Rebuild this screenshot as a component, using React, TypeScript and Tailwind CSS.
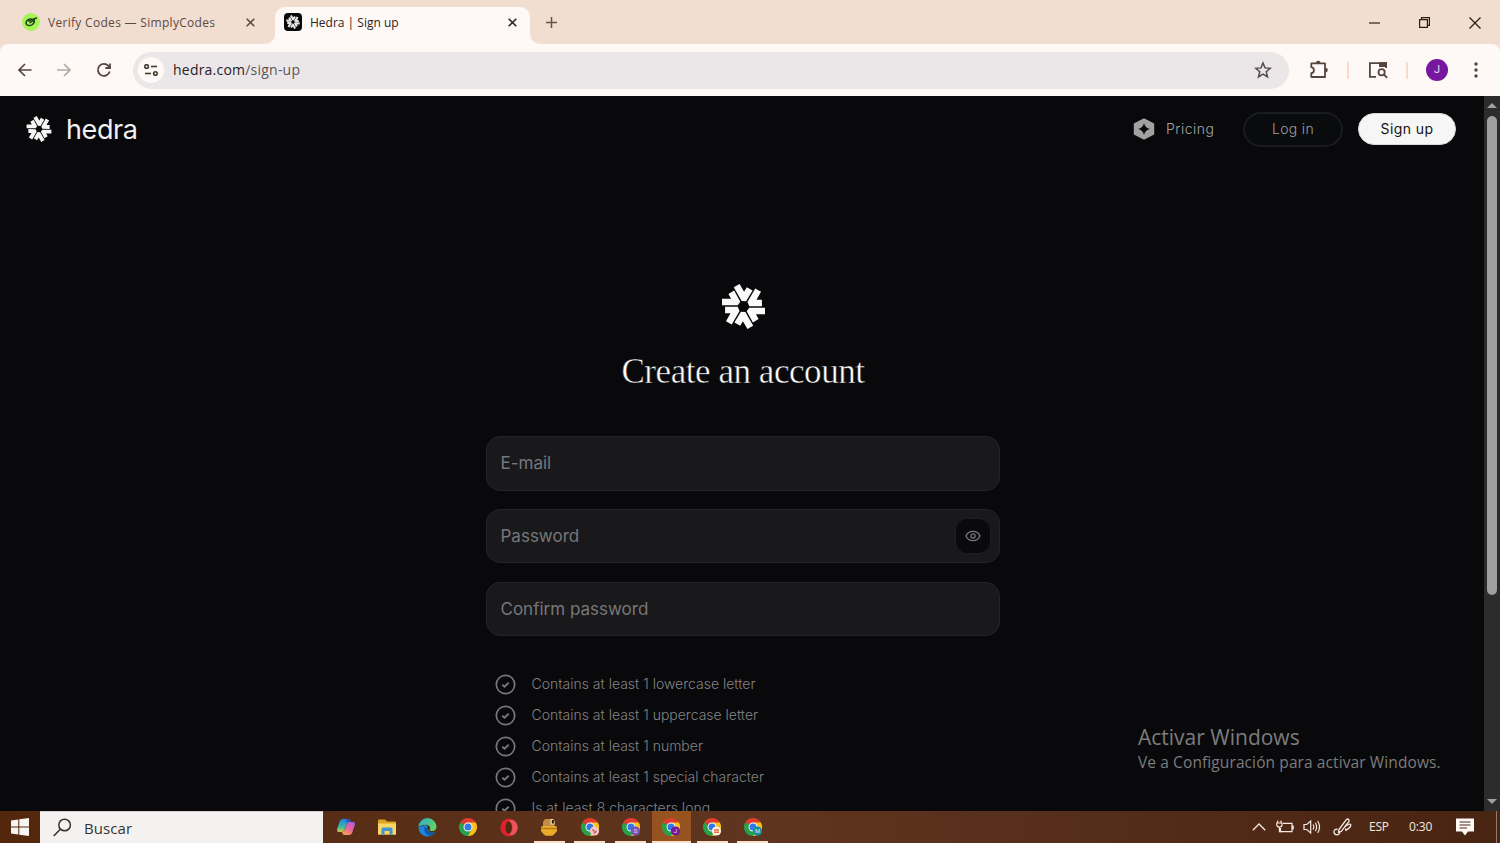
import React from "react";

interface IconProp {
    className?: string
}

interface MarkProp {
    size: number,
    color: string
}

const HedraMark: React.FC<MarkProp> = ({ size, color }) => {
    return (
        <svg width={size} height={size} viewBox="-66 -66 132 132" fill={color} className="shrink-0">
            {[0, 60, 120, 180, 240, 300].map((angle) => (
                <path
                    key={angle}
                    transform={`rotate(${angle})`}
                    d="M-63 -3.5 L-17 -3.5 L-9.4 -14.2 L-27.5 -46.6 L-44.3 -36.8 L-36.4 -23 L-63 -23 Z"
                />
            ))}
        </svg>
    )
}

const CloseIcon: React.FC<IconProp> = ({ className }) => {
    return (
        <svg width="9" height="9" viewBox="0 0 9 9" stroke="currentColor" strokeWidth="1.6" className={className}>
            <path d="M0.7 0.7 L8.3 8.3 M8.3 0.7 L0.7 8.3" />
        </svg>
    )
}

const TabStrip = () => {
    return (
        <div className="flex h-[44px] bg-[#f2ddd1] font-['Open_Sans',sans-serif] text-[12px]">
            <div className="flex h-[44px] w-[275px] items-center pl-[22px] text-[#5c4a42]">
                <svg width="18" height="18" viewBox="0 0 18 18" className="shrink-0">
                    <circle cx="9" cy="9" r="9" fill="#a4f555" />
                    <g fill="none" stroke="#25451a" strokeWidth="1.5" strokeLinecap="round">
                        <path d="M9.8 6.2 C7 5.2 3.9 7.6 4 10 C4.2 12.8 8.3 13.2 10.5 11.5 C12.3 10.2 12.6 8.6 12.2 7 L8 9.6" />
                        <path d="M6.5 8 L14.5 5" />
                    </g>
                </svg>
                <span className="mt-[2px] ml-[8px] w-[169px] whitespace-nowrap tracking-[0.3px]">Verify Codes — SimplyCodes</span>
                <CloseIcon className="ml-[29px] shrink-0" />
            </div>
            <div className="relative mt-[7px] flex h-[37px] w-[255px] items-center rounded-t-[10px] bg-[#fef9f6] pb-[7px] pl-[9px] text-[#2c2421]">
                <svg width="10" height="10" viewBox="0 0 10 10" className="absolute bottom-0 -left-[10px]">
                    <path d="M10 0 A10 10 0 0 1 0 10 H10 Z" fill="#fef9f6" />
                </svg>
                <svg width="10" height="10" viewBox="0 0 10 10" className="absolute -right-[10px] bottom-0">
                    <path d="M0 0 A10 10 0 0 0 10 10 H0 Z" fill="#fef9f6" />
                </svg>
                <div className="flex size-[18px] items-center justify-center rounded-[4px] bg-[#08080a]">
                    <HedraMark size={14} color="#e8e8e8" />
                </div>
                <span className="mt-[2px] ml-[8px] w-[90px] whitespace-nowrap">Hedra | Sign up</span>
                <CloseIcon className="ml-[108px] shrink-0" />
            </div>
            <svg width="11" height="11" viewBox="0 0 11 11" stroke="#65534a" strokeWidth="1.5" className="mt-[17px] ml-[16px]">
                <path d="M5.5 0 V11 M0 5.5 H11" />
            </svg>
            <div className="mt-[17px] mr-[19px] ml-auto flex gap-[39px] text-[#2b2019]">
                <svg width="11" height="11" viewBox="0 0 11 11" stroke="currentColor" strokeWidth="1.2">
                    <path d="M0 6 H11" />
                </svg>
                <svg width="11" height="11" viewBox="0 0 11 11" fill="none" stroke="currentColor" strokeWidth="1.2">
                    <path d="M0.6 2.6 H8.4 V10.4 H0.6 Z M2.6 2.6 V0.6 H10.4 V8.4 H8.4" />
                </svg>
                <svg width="12" height="12" viewBox="0 0 12 12" stroke="currentColor" strokeWidth="1.3">
                    <path d="M0.5 0.5 L11.5 11.5 M11.5 0.5 L0.5 11.5" />
                </svg>
            </div>
        </div>
    )
}

const Toolbar = () => {
    return (
        <div className="bg-[#f2ddd1]">
            <div className="flex h-[52px] items-center rounded-t-[8px] bg-[#fef9f6] pl-[17px] text-[#55453d]">
                <svg width="16" height="16" viewBox="0 0 16 16" fill="none" stroke="currentColor" strokeWidth="1.7">
                    <path d="M14.5 8 H2.5 M8 2 L2 8 L8 14" />
                </svg>
                <svg width="16" height="16" viewBox="0 0 16 16" fill="none" stroke="#b3a9a4" strokeWidth="1.7" className="ml-[23px]">
                    <path d="M1 8 H13.5 M8 2 L14 8 L8 14" />
                </svg>
                <svg width="16" height="16" viewBox="0 0 16 16" fill="none" stroke="currentColor" strokeWidth="1.8" className="ml-[24px]">
                    <path d="M13.7 9.5 A6 6 0 1 1 12.4 3.9 L13.8 5.4 M14 1.4 V6 H9.4" />
                </svg>
                <div className="ml-[21px] flex h-[37px] w-[1156px] items-center rounded-full bg-[#ebe7e9] pr-[17px] pl-[5px]">
                    <div className="flex size-[26px] items-center justify-center rounded-full bg-[#fef9f6]">
                        <svg width="14" height="12" viewBox="0 0 14 12" fill="none" stroke="#453831" strokeWidth="1.6">
                            <circle cx="2.6" cy="2.5" r="1.8" />
                            <path d="M7 2.5 H13" />
                            <circle cx="11.4" cy="9.5" r="1.8" />
                            <path d="M1 9.5 H7" />
                        </svg>
                    </div>
                    <span className="mb-[2px] ml-[9px] font-['Open_Sans',sans-serif] text-[14px] tracking-[0.22px] text-[#5d5657]">
                        <span className="text-[#29211f]">hedra.com</span>/sign-up
                    </span>
                    <svg width="18" height="18" viewBox="0 0 18 18" fill="none" stroke="#544943" strokeWidth="1.5" className="ml-auto">
                        <path d="M9 2 L11 6.9 L16.3 7.3 L12.2 10.7 L13.5 15.9 L9 13.1 L4.5 15.9 L5.8 10.7 L1.7 7.3 L7 6.9 Z" />
                    </svg>
                </div>
                <svg width="20" height="20" viewBox="0 0 20 20" className="ml-[20px]">
                    <path
                        d="M2.3 3.4 H16 V17 H2.3 V13.2 C5.8 12.8 5.8 7.6 2.3 7.2 Z"
                        fill="none" stroke="currentColor" strokeWidth="1.8" strokeLinejoin="round"
                    />
                    <path d="M6.9 3 A2.3 2.3 0 0 1 11.5 3 Z M16.5 7.8 A2.3 2.3 0 0 1 16.5 12.4 Z" fill="currentColor" />
                </svg>
                <div className="ml-[17.5px] h-[17px] w-[2px] bg-[#fbdacb]"></div>
                <svg width="20" height="18" viewBox="0 0 20 18" fill="none" stroke="currentColor" strokeWidth="1.8" className="ml-[19px]">
                    <path d="M8 15.8 H1.9 V2.1 H18.1 V7" />
                    <path d="M11 1.2 H19 V6 H11 Z" fill="currentColor" stroke="none" />
                    <circle cx="13.6" cy="11.2" r="3.1" />
                    <path d="M15.9 13.5 L19.2 16.8" />
                </svg>
                <div className="ml-[18.5px] h-[17px] w-[2px] bg-[#fbdacb]"></div>
                <div className="ml-[18px] flex size-[22px] items-center justify-center rounded-full bg-[#77169f] font-['Roboto',sans-serif] text-[11px] text-[#eadcf2]">
                    J
                </div>
                <svg width="4" height="16" viewBox="0 0 4 16" fill="currentColor" className="ml-[26px]">
                    <circle cx="2" cy="2" r="1.7" />
                    <circle cx="2" cy="8" r="1.7" />
                    <circle cx="2" cy="14" r="1.7" />
                </svg>
            </div>
        </div>
    )
}

const SiteHeader = () => {
    return (
        <header className="flex h-[66px] items-center pr-[28px] pl-[26px] font-['Inter',sans-serif] text-[14px]">
            <HedraMark size={26} color="#f5f5f5" />
            <span className="mt-[2px] ml-[14px] text-[27px] leading-[32px] tracking-[-0.4px] text-[#f1f1f1]">hedra</span>
            <svg width="22" height="22" viewBox="0 0 22 22" className="ml-auto">
                <path d="M11 1.3 L20.2 6.2 V15.8 L11 20.7 L1.8 15.8 V6.2 Z" fill="#a2a2a3" stroke="#a2a2a3" strokeWidth="2" strokeLinejoin="round" />
                <path d="M11 5 Q12 10 17 11 Q12 12 11 17 Q10 12 5 11 Q10 10 11 5 Z" fill="#09090a" />
            </svg>
            <span className="mb-[2px] ml-[11px] w-[50px] whitespace-nowrap font-light tracking-[0.5px] text-[#a5a5a6]">Pricing</span>
            <button className="ml-[27px] h-[35px] w-[100px] rounded-full border-2 border-[#1a1b1d] bg-[#090b0c] pb-[2px] font-light tracking-[0.3px] text-[#a0a0a1]">Log in</button>
            <button className="ml-[15px] h-[32px] w-[98px] rounded-full border border-[#d8d8d8] bg-[#f6f6f6] pb-[2px] tracking-[0.4px] text-[#151515]">Sign up</button>
        </header>
    )
}

interface FieldProp {
    label: string,
    reveal?: boolean
}

const Field: React.FC<FieldProp> = ({ label, reveal }) => {
    return (
        <div className="flex h-[54.5px] items-center justify-between rounded-[14px] border border-[#242426] bg-[#19191b] pr-[8px] pl-[13.5px]">
            <span className="mt-px text-[17px] text-[#77777a]">{label}</span>
            {reveal && (
                <div className="flex size-[36px] items-center justify-center rounded-[12px] border border-[#1f1f21] bg-[#0a0a0c]">
                    <svg width="16" height="12" viewBox="0 0 16 12" fill="none" stroke="#777779" strokeWidth="1.3">
                        <path d="M1 6 C3.5 -0.2 12.5 -0.2 15 6 C12.5 12.2 3.5 12.2 1 6 Z" />
                        <circle cx="8" cy="6" r="2.1" />
                    </svg>
                </div>
            )}
        </div>
    )
}

const Rule: React.FC<{ text: string }> = ({ text }) => {
    return (
        <li className="flex h-[31px] items-center">
            <svg width="21" height="21" viewBox="0 0 21 21" fill="none" stroke="#777779">
                <circle cx="10.5" cy="10.5" r="9.2" strokeWidth="1.7" />
                <path d="M7.3 10.8 L9.5 12.8 L13.7 8.7" strokeWidth="1.9" />
            </svg>
            <span className="mb-px ml-[15.5px] whitespace-nowrap">{text}</span>
        </li>
    )
}

const rules = [
    "Contains at least 1 lowercase letter",
    "Contains at least 1 uppercase letter",
    "Contains at least 1 number",
    "Contains at least 1 special character",
    "Is at least 8 characters long",
]

const SignUp = () => {
    return (
        <main className="ml-[486px] flex w-[514px] flex-col font-['Inter',sans-serif]">
            <div className="mt-[122px] flex justify-center">
                <HedraMark size={45} color="#fafafa" />
            </div>
            <h1 className="mt-[23px] text-center font-['Liberation_Serif',serif] text-[35px] leading-[40px] tracking-[-0.45px] whitespace-nowrap text-[#ffffff] [-webkit-text-stroke:0.5px_#09090b]">
                Create an account
            </h1>
            <div className="mt-[44px] flex flex-col gap-[18.25px]">
                <Field label="E-mail" />
                <Field label="Password" reveal />
                <Field label="Confirm password" />
            </div>
            <ul className="mt-[32.5px] pl-[9px] text-[14px] font-light text-[#838385]">
                {rules.map((text) => (
                    <Rule key={text} text={text} />
                ))}
            </ul>
        </main>
    )
}

const Scrollbar = () => {
    return (
        <div className="flex w-[16px] shrink-0 flex-col items-center justify-between bg-[#2c2c2c] py-[7px]">
            <svg width="10" height="5" viewBox="0 0 10 5" fill="#a0a0a0" className="shrink-0">
                <path d="M0 5 L5 0 L10 5 Z" />
            </svg>
            <div className="mt-[8px] mb-auto h-[479px] w-[10px] rounded-full bg-[#9f9f9f]"></div>
            <svg width="10" height="5" viewBox="0 0 10 5" fill="#a0a0a0" className="shrink-0">
                <path d="M0 0 L5 5 L10 0 Z" />
            </svg>
        </div>
    )
}

interface ChromeProp {
    badge?: string,
    letter?: string
}

const ChromeIcon: React.FC<ChromeProp> = ({ badge, letter }) => {
    return (
        <svg width="20" height="20" viewBox="0 0 20 20">
            <path d="M10 10 L2.2 5.5 A9 9 0 0 1 17.8 5.5 Z" fill="#e23b2e" />
            <path d="M10 10 L17.8 5.5 A9 9 0 0 1 10 19 Z" fill="#fbc116" />
            <path d="M10 10 L10 19 A9 9 0 0 1 2.2 5.5 Z" fill="#27a14a" />
            <path d="M10 5.5 H17.8 L13.9 12.2 Z" fill="#fbc116" />
            <path d="M2.2 5.5 L6.1 12.2 L10 10 Z" fill="#27a14a" />
            <path d="M13.9 12.2 L10 19 L6.1 12.2 Z" fill="#27a14a" />
            <circle cx="10" cy="10" r="4.5" fill="#f4f6f8" />
            <circle cx="10" cy="10" r="3.5" fill="#3278e8" />
            {badge && <circle cx="14.5" cy="14" r="4.6" fill={badge} />}
            {letter && (
                <text x="14.5" y="16.2" textAnchor="middle" fontSize="6" fontFamily="Roboto, sans-serif" fill="#e9dcf4">{letter}</text>
            )}
            {badge === "#f4c6c6" && <path d="M12.5 12.5 L14.5 14.5 M14 16.5 L16.5 14" stroke="#c5484e" strokeWidth="1.2" />}
            {badge === "#fbf3ec" && <path d="M12 13 H17 M12 15.2 H17" stroke="#e8702f" strokeWidth="1.5" />}
        </svg>
    )
}

const CopilotIcon = () => {
    return (
        <svg width="20" height="18" viewBox="0 0 20 18">
            <defs>
                <linearGradient id="copilotLeft" x1="0.2" y1="0" x2="0.1" y2="1">
                    <stop offset="0" stopColor="#2186e8" />
                    <stop offset="0.6" stopColor="#36bba0" />
                    <stop offset="1" stopColor="#e5c33a" />
                </linearGradient>
                <linearGradient id="copilotRight" x1="1" y1="0" x2="0.4" y2="1">
                    <stop offset="0" stopColor="#a95af0" />
                    <stop offset="0.6" stopColor="#e8659c" />
                    <stop offset="1" stopColor="#f79a55" />
                </linearGradient>
            </defs>
            <path d="M7 1 H12.5 Q14 1 14.5 4 L11 5 L8.5 12 Q8 14 6 14 H3 Q0.5 14 1.2 11 L3.7 3.5 Q4.5 1 7 1 Z" fill="url(#copilotLeft)" />
            <path d="M10 1 H12.5 Q14 1 14.8 4 H13.5 Q11.6 4 11 5.5 Z" fill="#2457cf" />
            <path d="M13.5 4 H17 Q19.5 4 18.8 7 L16.3 14.5 Q15.5 17 13 17 H8 Q6.5 17 6 14 Q8 14 8.8 12 L11 5.5 Q11.6 4 13.5 4 Z" fill="url(#copilotRight)" />
        </svg>
    )
}

const FolderIcon = () => {
    return (
        <svg width="18" height="16" viewBox="0 0 18 16">
            <path d="M0 1.5 Q0 0.5 1 0.5 H7 L9 2.5 H17 Q18 2.5 18 3.5 V15.5 H0 Z" fill="#dfa323" />
            <path d="M0 4.5 H18 V15.5 H0 Z" fill="#fbd667" />
            <path d="M3.5 15.5 V10 Q3.5 8.5 5 8.5 H13 Q14.5 8.5 14.5 10 V15.5 H11.5 V12 H6.5 V15.5 Z" fill="#3f96d2" />
        </svg>
    )
}

const EdgeIcon = () => {
    return (
        <svg width="19" height="19" viewBox="0 0 19 19">
            <defs>
                <linearGradient id="edgeTop" x1="0" y1="0" x2="1" y2="0.4">
                    <stop offset="0" stopColor="#2aa9dc" />
                    <stop offset="1" stopColor="#5fd365" />
                </linearGradient>
            </defs>
            <path d="M0.5 9 A9 9 0 0 0 9.5 18.5 Q14.5 18.5 17.5 14.3 Q14 15.5 11 13.5 L9 7 Z" fill="#1b86dc" />
            <path d="M6.5 9 C5.5 13 8 17 12.5 17.9 C15 17 16.7 15.6 17.5 14.3 C13.5 15.7 9 14 8.9 10.3 Z" fill="#0e57a4" />
            <path d="M0.5 9 A9 9 0 0 1 18.5 9 C18.5 12 16 13.2 13.8 13 C11.8 12.8 11 12.2 11.7 11.2 C13 9 11 6.8 8 6.8 C4.5 6.8 1.5 8 0.5 9 Z" fill="url(#edgeTop)" />
            <path d="M9 9.3 Q10.5 8 11.8 9.5 Q12 10.5 11.3 11.5 Q11 12.4 12.2 12.9 Q9.5 13 9 9.3 Z" fill="#57290f" />
        </svg>
    )
}

const OperaIcon = () => {
    return (
        <svg width="18" height="19" viewBox="0 0 18 19">
            <ellipse cx="9" cy="9.5" rx="8.6" ry="9" fill="#e3202f" />
            <path d="M7 3.4 Q13 0.5 15.7 4 A8.6 9 0 0 1 15.7 15 Q13 18.5 7 15.6 Q12.4 15 12.4 9.5 Q12.4 4 7 3.4 Z" fill="#e8545c" />
            <ellipse cx="8.7" cy="9.5" rx="3.2" ry="6.3" fill="#54290f" />
        </svg>
    )
}

const DuckIcon = () => {
    return (
        <svg width="18" height="20" viewBox="0 0 18 20">
            <path d="M5 2 H12 L14.5 4 V10 H3 V5 Z" fill="#c18a45" />
            <path d="M10.5 2 H13 L14.5 4 V7.5 H10.5 Z" fill="#f2dfb4" />
            <path d="M11.8 3 H13.8 V6.5 H11.8 Z" fill="#251910" />
            <path d="M2 9 H16 L17 10.5 V14 L15 16.5 L12.5 18.8 H5.5 L3 16.5 L1 14 V10.5 Z" fill="#e9ab2a" />
            <path d="M1 10.8 H17 V12.2 H1 Z" fill="#b87714" />
        </svg>
    )
}

interface TaskProp {
    icon: React.ReactNode,
    open?: boolean,
    active?: boolean
}

const TaskItem: React.FC<TaskProp> = ({ icon, open, active }) => {
    return (
        <div className="flex h-[32px] w-[40.7px] flex-col items-center">
            <div className={active ? "flex h-[30px] w-[39px] items-center justify-center bg-[#96521f] pt-[2px]" : "flex h-[30px] w-[39px] items-center justify-center pt-[2px]"}>
                {icon}
            </div>
            {active && <div className="h-[2px] w-[39px] bg-[#fbe0cb]"></div>}
            {open && !active && <div className="h-[2px] w-[31px] bg-[#fbe0cb]"></div>}
        </div>
    )
}

const Taskbar = () => {
    return (
        <footer className="flex h-[32px] items-center bg-linear-to-r from-[#52270c] via-[#60351f] to-[#482412] font-['Open_Sans',sans-serif]">
            <svg width="18" height="18" viewBox="0 0 18 18" fill="#f8f4f1" className="ml-[11px]">
                <path d="M0 2.5 L7.3 1.4 V8.5 H0 Z M8.3 1.3 L18 0 V8.5 H8.3 Z M0 9.5 H7.3 V16.6 L0 15.5 Z M8.3 9.5 H18 V18 L8.3 16.7 Z" />
            </svg>
            <div className="ml-[11px] flex h-[32px] w-[283px] items-center border-t border-[#d8d1cd] bg-[#f3f2f1] pl-[13px]">
                <svg width="19" height="19" viewBox="0 0 19 19" fill="none" stroke="#33302f" strokeWidth="1.5">
                    <circle cx="11.6" cy="7" r="5.8" />
                    <path d="M7.3 11.2 L0.7 18" />
                </svg>
                <span className="mt-px ml-[12px] text-[15px] tracking-[0.1px] text-[#373433]">Buscar</span>
            </div>
            <div className="ml-[2.5px] flex">
                <TaskItem icon={<CopilotIcon />} />
                <TaskItem icon={<FolderIcon />} />
                <TaskItem icon={<EdgeIcon />} />
                <TaskItem icon={<ChromeIcon />} />
                <TaskItem icon={<OperaIcon />} />
                <TaskItem icon={<DuckIcon />} open />
                <TaskItem icon={<ChromeIcon badge="#f4c6c6" />} open />
                <TaskItem icon={<ChromeIcon badge="#7a52b5" letter="S" />} open />
                <TaskItem icon={<ChromeIcon badge="#74199c" letter="J" />} open active />
                <TaskItem icon={<ChromeIcon badge="#fbf3ec" />} open />
                <TaskItem icon={<ChromeIcon badge="#0e8f9c" letter="M" />} open />
            </div>
            <div className="ml-auto flex h-[32px] items-center text-[#f5e9e1]">
                <svg width="14" height="8" viewBox="0 0 14 8" fill="none" stroke="currentColor" strokeWidth="1.3">
                    <path d="M0.8 7.2 L7 1 L13.2 7.2" />
                </svg>
                <svg width="18" height="14" viewBox="0 0 18 14" fill="none" stroke="currentColor" strokeWidth="1.2" className="ml-[10px]">
                    <path d="M7 3.3 H16 V11.6 H4.5 V8 M17.2 5.5 V9.5" />
                    <path d="M1.7 0.5 V3 M5 0.5 V3 M0.8 3 H6 V4.8 Q6 7 3.4 7 Q0.8 7 0.8 4.8 Z M3.4 7 V11.6 H5" />
                </svg>
                <svg width="19" height="16" viewBox="0 0 19 16" fill="none" stroke="currentColor" strokeWidth="1.2" className="ml-[9px]">
                    <path d="M1 5.5 H3.7 L7.7 2 V14 L3.7 10.5 H1 Z" />
                    <path d="M10 5.5 Q11.7 8 10 10.5 M12.3 3.7 Q15 8 12.3 12.3 M14.7 2 Q18.4 8 14.7 14" />
                </svg>
                <svg width="19" height="18" viewBox="0 0 19 18" fill="none" stroke="currentColor" strokeWidth="1.3" strokeLinejoin="round" className="ml-[11px]">
                    <path d="M6 11.5 L13.3 1.7 Q14.6 0.5 15.6 1.5 Q16.5 2.5 15.6 3.8 L8.3 13.3 L5.3 14.3 Z" />
                    <path d="M4.5 11.3 Q1 11 1 13.7 Q1 16.8 4 16.8 Q6 16.8 7 14.5 M12 8.5 Q17.5 4.5 17.8 7.3 Q17.5 9.5 13.5 12 Q12 13 13 10.5" />
                </svg>
                <span className="ml-[17px] w-[21px] text-[12px] tracking-[-0.2px]">ESP</span>
                <span className="ml-[19px] w-[24px] text-[12px] tracking-[-0.1px]">0:30</span>
                <svg width="18" height="18" viewBox="0 0 18 18" className="ml-[23px]">
                    <path d="M0 0.5 H18 V13.5 H12 L9 17.5 L6 13.5 H0 Z" fill="#fffaf7" />
                    <path d="M3.5 4 H14.5 M3.5 7 H14.5 M3.5 10 H11" stroke="#4d291a" strokeWidth="1.1" />
                </svg>
                <div className="mr-[3px] ml-[22px] h-[32px] w-px bg-[#947b6d]"></div>
            </div>
        </footer>
    )
}

const App = () => {
    return (
        <div className="relative flex h-[843px] w-[1500px] flex-col overflow-hidden">
            <TabStrip />
            <Toolbar />
            <div className="flex h-[715px] overflow-hidden bg-[#09090b]">
                <div className="w-[1484px]">
                    <SiteHeader />
                    <SignUp />
                </div>
                <Scrollbar />
            </div>
            <Taskbar />
            <div className="absolute top-[723px] left-[1138px] font-['Open_Sans',sans-serif] whitespace-nowrap text-[#7c7c7d]">
                <p className="text-[21px] leading-[28px]">Activar Windows</p>
                <p className="text-[15.5px] leading-[22px] tracking-[0.1px]">Ve a Configuración para activar Windows.</p>
            </div>
        </div>
    )
}

export default App
